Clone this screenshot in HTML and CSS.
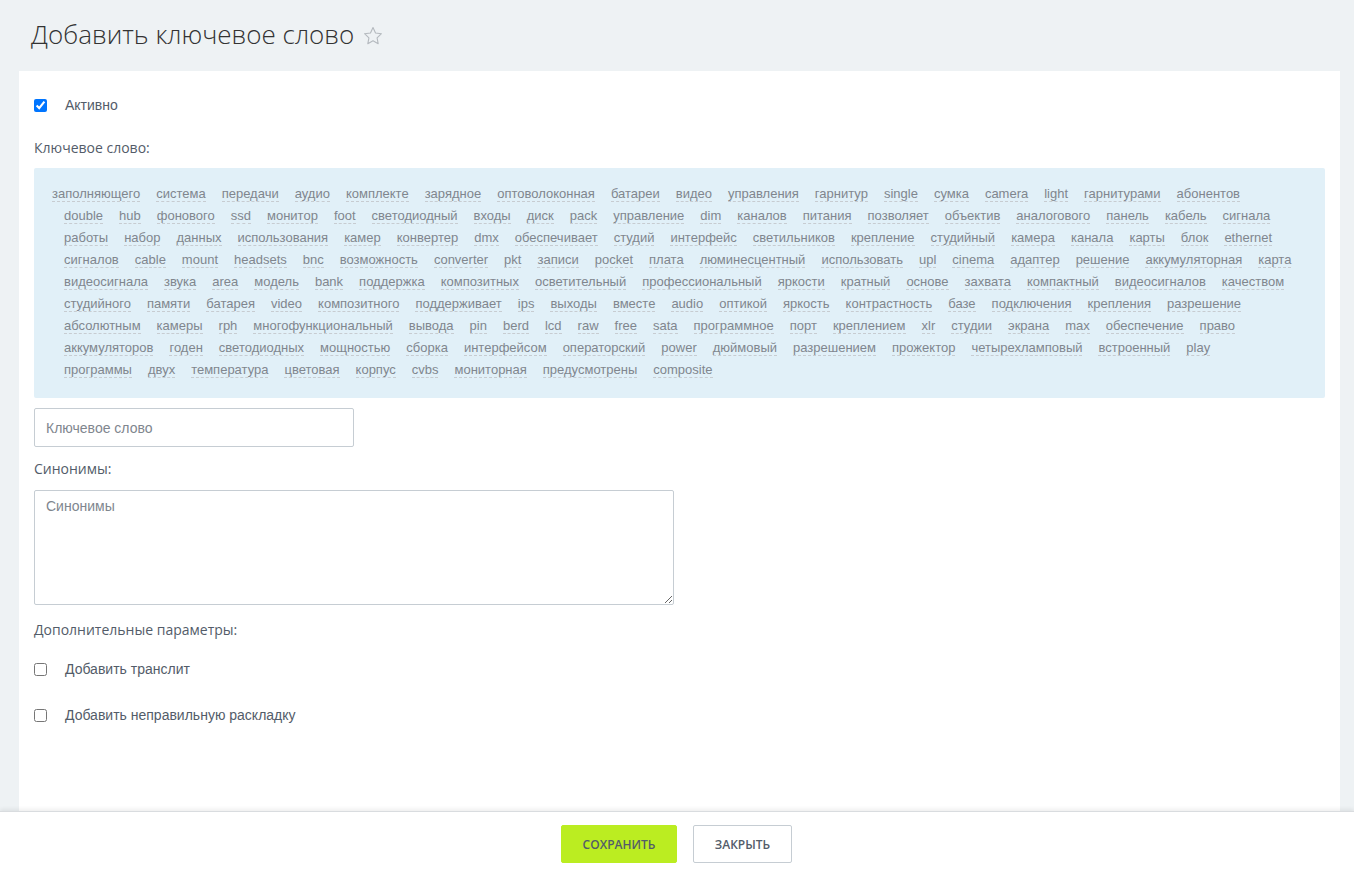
FILE: index.html
```html
<!DOCTYPE html>
<html lang="ru">
<head>
<meta charset="utf-8">
<title>Добавить ключевое слово</title>
<link rel="stylesheet" href="styles.css">
</head>
<body>
<div class="page">
  <header class="head">
    <h1 class="title">Добавить ключевое слово</h1>
    <svg class="star" width="22" height="22" viewBox="0 0 24 24"><path d="M12 2.8l2.75 5.9 6.45.8-4.75 4.45 1.2 6.4L12 17.2l-5.65 3.15 1.2-6.4L2.8 9.5l6.45-.8z" fill="none" stroke="#b4b9be" stroke-width="1.2" stroke-linejoin="round"/></svg>
  </header>

  <main class="card">
    <label class="check-row first">
      <input type="checkbox" checked>
      <span>Активно</span>
    </label>

    <div class="label kw-label">Ключевое слово:</div>

    <div class="tags">
      <div class="tag-row"><span class="tag">заполняющего</span><span class="tag">система</span><span class="tag">передачи</span><span class="tag">аудио</span><span class="tag">комплекте</span><span class="tag">зарядное</span><span class="tag">оптоволоконная</span><span class="tag">батареи</span><span class="tag">видео</span><span class="tag">управления</span><span class="tag">гарнитур</span><span class="tag">single</span><span class="tag">сумка</span><span class="tag">camera</span><span class="tag">light</span><span class="tag">гарнитурами</span><span class="tag">абонентов</span></div>
      <div class="tag-row"><span class="tag">double</span><span class="tag">hub</span><span class="tag">фонового</span><span class="tag">ssd</span><span class="tag">монитор</span><span class="tag">foot</span><span class="tag">светодиодный</span><span class="tag">входы</span><span class="tag">диск</span><span class="tag">pack</span><span class="tag">управление</span><span class="tag">dim</span><span class="tag">каналов</span><span class="tag">питания</span><span class="tag">позволяет</span><span class="tag">объектив</span><span class="tag">аналогового</span><span class="tag">панель</span><span class="tag">кабель</span><span class="tag">сигнала</span></div>
      <div class="tag-row"><span class="tag">работы</span><span class="tag">набор</span><span class="tag">данных</span><span class="tag">использования</span><span class="tag">камер</span><span class="tag">конвертер</span><span class="tag">dmx</span><span class="tag">обеспечивает</span><span class="tag">студий</span><span class="tag">интерфейс</span><span class="tag">светильников</span><span class="tag">крепление</span><span class="tag">студийный</span><span class="tag">камера</span><span class="tag">канала</span><span class="tag">карты</span><span class="tag">блок</span><span class="tag">ethernet</span></div>
      <div class="tag-row"><span class="tag">сигналов</span><span class="tag">cable</span><span class="tag">mount</span><span class="tag">headsets</span><span class="tag">bnc</span><span class="tag">возможность</span><span class="tag">converter</span><span class="tag">pkt</span><span class="tag">записи</span><span class="tag">pocket</span><span class="tag">плата</span><span class="tag">люминесцентный</span><span class="tag">использовать</span><span class="tag">upl</span><span class="tag">cinema</span><span class="tag">адаптер</span><span class="tag">решение</span><span class="tag">аккумуляторная</span><span class="tag">карта</span></div>
      <div class="tag-row"><span class="tag">видеосигнала</span><span class="tag">звука</span><span class="tag">area</span><span class="tag">модель</span><span class="tag">bank</span><span class="tag">поддержка</span><span class="tag">композитных</span><span class="tag">осветительный</span><span class="tag">профессиональный</span><span class="tag">яркости</span><span class="tag">кратный</span><span class="tag">основе</span><span class="tag">захвата</span><span class="tag">компактный</span><span class="tag">видеосигналов</span><span class="tag">качеством</span></div>
      <div class="tag-row"><span class="tag">студийного</span><span class="tag">памяти</span><span class="tag">батарея</span><span class="tag">video</span><span class="tag">композитного</span><span class="tag">поддерживает</span><span class="tag">ips</span><span class="tag">выходы</span><span class="tag">вместе</span><span class="tag">audio</span><span class="tag">оптикой</span><span class="tag">яркость</span><span class="tag">контрастность</span><span class="tag">базе</span><span class="tag">подключения</span><span class="tag">крепления</span><span class="tag">разрешение</span></div>
      <div class="tag-row"><span class="tag">абсолютным</span><span class="tag">камеры</span><span class="tag">rph</span><span class="tag">многофункциональный</span><span class="tag">вывода</span><span class="tag">pin</span><span class="tag">berd</span><span class="tag">lcd</span><span class="tag">raw</span><span class="tag">free</span><span class="tag">sata</span><span class="tag">программное</span><span class="tag">порт</span><span class="tag">креплением</span><span class="tag">xlr</span><span class="tag">студии</span><span class="tag">экрана</span><span class="tag">max</span><span class="tag">обеспечение</span><span class="tag">право</span></div>
      <div class="tag-row"><span class="tag">аккумуляторов</span><span class="tag">годен</span><span class="tag">светодиодных</span><span class="tag">мощностью</span><span class="tag">сборка</span><span class="tag">интерфейсом</span><span class="tag">операторский</span><span class="tag">power</span><span class="tag">дюймовый</span><span class="tag">разрешением</span><span class="tag">прожектор</span><span class="tag">четырехламповый</span><span class="tag">встроенный</span><span class="tag">play</span></div>
      <div class="tag-row"><span class="tag">программы</span><span class="tag">двух</span><span class="tag">температура</span><span class="tag">цветовая</span><span class="tag">корпус</span><span class="tag">cvbs</span><span class="tag">мониторная</span><span class="tag">предусмотрены</span><span class="tag">composite</span></div>
    </div>

    <input class="input" type="text" placeholder="Ключевое слово">

    <div class="label syn-label">Синонимы:</div>
    <textarea class="textarea" placeholder="Синонимы"></textarea>

    <div class="label extra-label">Дополнительные параметры:</div>

    <label class="check-row translit">
      <input type="checkbox">
      <span>Добавить транслит</span>
    </label>
    <label class="check-row layout">
      <input type="checkbox">
      <span>Добавить неправильную раскладку</span>
    </label>
  </main>

  <footer class="footer">
    <button class="btn btn-save" type="button">Сохранить</button>
    <button class="btn btn-close" type="button">Закрыть</button>
  </footer>
</div>
</body>
</html>
```

FILE: styles.css
```css
* { box-sizing: border-box; }

html, body {
  margin: 0;
  padding: 0;
  height: 100%;
}

body {
  background: #eef2f4;
  font-family: "Liberation Sans", Arial, sans-serif;
  font-size: 14px;
  color: #535c69;
  overflow: hidden;
}

.page {
  display: flex;
  flex-direction: column;
  height: 100vh;
}

.head {
  height: 71px;
  flex: none;
  display: flex;
  align-items: center;
  padding: 0 0 4px 31px;
}

.title {
  margin: 0;
  font-family: "Open Sans", sans-serif;
  font-weight: 300;
  font-size: 26px;
  color: #333;
}

.star {
  margin-left: 8px;
  margin-top: 4px;
}

.card {
  flex: 1;
  min-height: 0;
  overflow: hidden;
  background: #fff;
  margin: 0 14px 0 19px;
  padding: 25px 15px 0;
  display: flex;
  flex-direction: column;
  align-items: flex-start;
}

.check-row {
  display: flex;
  align-items: center;
  height: 18px;
  line-height: 18px;
  font-size: 14px;
  color: #535c69;
  cursor: pointer;
}

.check-row input {
  width: 13px;
  height: 13px;
  margin: 0 18px 0 0;
}

.label {
  height: 18px;
  line-height: 18px;
  font-family: "Open Sans", sans-serif;
  font-size: 14px;
  color: #535c69;
}

.kw-label { margin-top: 25px; }

.tags {
  align-self: stretch;
  margin-top: 11px;
  background: #e1f0f8;
  border-radius: 2px;
  padding: 15px 18px 17px 30px;
}

.tag-row {
  display: flex;
  gap: 16px;
  height: 22px;
  align-items: center;
}

.tag-row:first-child {
  margin-left: -12px;
}

.tag {
  color: #80868e;
  font-size: 13px;
  line-height: 15px;
  border-bottom: 1px dashed #c7ccd1;
  white-space: nowrap;
}

.input {
  margin-top: 10px;
  width: 320px;
  height: 39px;
  border: 1px solid #c6cdd3;
  border-radius: 2px;
  padding: 0 11px;
  font-family: inherit;
  font-size: 14px;
  color: #535c69;
  background: #fff;
}

.input::placeholder,
.textarea::placeholder {
  color: #80868e;
}

.syn-label { margin-top: 13px; }

.textarea {
  margin-top: 12px;
  width: 640px;
  height: 115px;
  border: 1px solid #c6cdd3;
  border-radius: 2px;
  padding: 7px 11px;
  font-family: inherit;
  font-size: 14px;
  color: #535c69;
  resize: both;
}

.extra-label { margin-top: 16px; }

.translit { margin-top: 21px; }

.layout { margin-top: 28px; }

.footer {
  flex: none;
  height: 65px;
  background: #fff;
  border-top: 1px solid #d9dcdf;
  box-shadow: 0 -2px 4px rgba(0, 0, 0, 0.07);
  display: flex;
  justify-content: center;
  align-items: flex-start;
  gap: 16px;
  padding: 13px 1px 0 0;
  position: relative;
}

.btn {
  height: 38px;
  border-radius: 2px;
  font-family: "Open Sans", sans-serif;
  font-weight: 600;
  font-size: 12px;
  text-transform: uppercase;
  color: #535c69;
  cursor: pointer;
  padding: 0;
}

.btn-save {
  width: 116px;
  background: #bbed21;
  border: 1px solid #bbed21;
}

.btn-close {
  width: 99px;
  background: #fff;
  border: 1px solid #c6cdd3;
}
```
